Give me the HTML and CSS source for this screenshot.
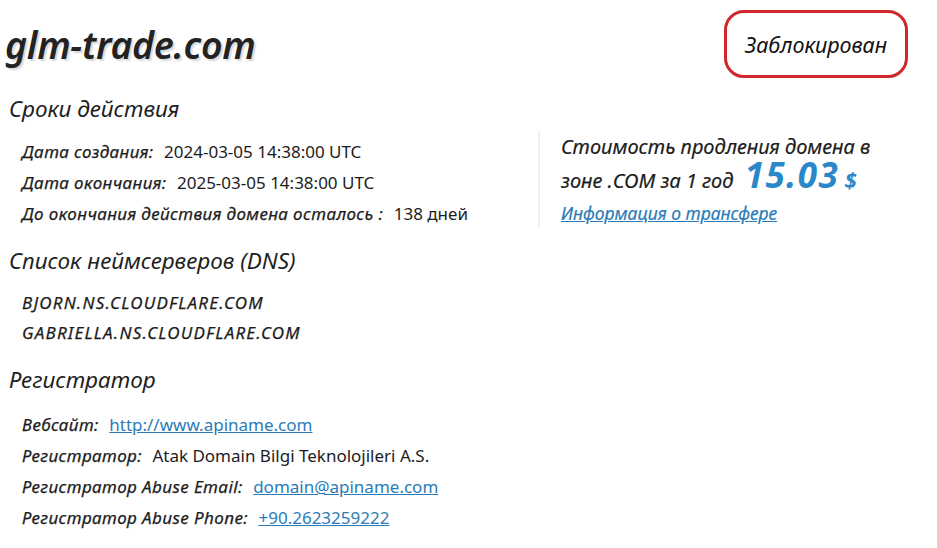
FILE: index.html
```html
<!DOCTYPE html>
<html lang="ru">
<head>
    <meta charset="UTF-8">
    <meta name="viewport" content="width=device-width, initial-scale=1.0">
    <title>glm-trade.com</title>
    <link rel="stylesheet" href="styles.css">
</head>
<body>
    <div class="header">
        <h1>glm-trade.com</h1>
        <div class="status">Заблокирован</div>
    </div>

    <div class="main">
        <div class="info">
            <h2>Сроки действия</h2>
            <div class="row"><span class="label">Дата создания:</span> <span class="value">2024-03-05 14:38:00 UTC</span></div>
            <div class="row"><span class="label">Дата окончания:</span> <span class="value">2025-03-05 14:38:00 UTC</span></div>
            <div class="row"><span class="label">До окончания действия домена осталось :</span> <span class="value">138 дней</span></div>

            <h2>Список неймсерверов (DNS)</h2>
            <div class="row ns">BJORN.NS.CLOUDFLARE.COM</div>
            <div class="row ns">GABRIELLA.NS.CLOUDFLARE.COM</div>

            <h2 class="registrar">Регистратор</h2>
            <div class="row"><span class="label">Вебсайт:</span> <a class="value" href="#">http://www.apiname.com</a></div>
            <div class="row"><span class="label">Регистратор:</span> <span class="value">Atak Domain Bilgi Teknolojileri A.S.</span></div>
            <div class="row"><span class="label">Регистратор Abuse Email:</span> <a class="value" href="#">domain@apiname.com</a></div>
            <div class="row"><span class="label">Регистратор Abuse Phone:</span> <a class="value" href="#">+90.2623259222</a></div>
        </div>

        <div class="renew">
            <p class="renew-text">Стоимость продления домена в<br>зоне .COM за 1 год <span class="price">15.03</span> <span class="currency">$</span></p>
            <a class="transfer" href="#">Информация о трансфере</a>
        </div>
    </div>
</body>
</html>
```

FILE: styles.css
```css
body {
    font-family: "Noto Sans", "Open Sans", sans-serif;
    color: #1c1c1c;
    background: #fff;
    margin: 0;
    padding: 10px 29px 0 5px;
}
.header {
    display: flex;
    justify-content: space-between;
    align-items: center;
}
h1 {
    margin: 0;
    font-size: 37.5px;
    font-style: italic;
    font-weight: 600;
    letter-spacing: -0.3px;
    color: #222;
    text-shadow: 2px 2px 2px #d6d6d6;
}
.status {
    box-sizing: border-box;
    width: 184px;
    height: 68px;
    display: flex;
    align-items: center;
    justify-content: center;
    border: 3px solid #d1262b;
    border-radius: 20px;
    font-size: 21.5px;
    font-style: italic;
    color: #111;
}
.main {
    display: flex;
    align-items: flex-start;
}
.info {
    width: 533px;
    margin-top: 4px;
}
h2 {
    margin: 17px 0 12px 4px;
    font-size: 22.5px;
    line-height: 30px;
    font-style: italic;
    font-weight: 400;
    color: #1f1f1f;
}
h2:first-child {
    margin-top: 12px;
}
h2.registrar {
    margin-bottom: 14px;
}
.row {
    padding-left: 17px;
    font-size: 17px;
    line-height: 31px;
}
.row.ns {
    line-height: 30px;
    font-style: italic;
    letter-spacing: 1.2px;
    -webkit-text-stroke: 0.25px currentColor;
}
.label {
    font-style: italic;
    letter-spacing: 0.4px;
    -webkit-text-stroke: 0.25px currentColor;
    margin-right: 6px;
}
a {
    color: #2b7bb9;
}
.renew {
    margin-top: 52px;
    padding-left: 21px;
    border-left: 2px solid #f1f1f1;
}
.renew-text {
    margin: 0;
    font-size: 20px;
    line-height: 34px;
    font-style: italic;
    -webkit-text-stroke: 0.2px currentColor;
}
.price {
    font-size: 35px;
    line-height: 0;
    font-weight: 700;
    letter-spacing: 1.5px;
    color: #2a88c8;
    margin-left: 6px;
    -webkit-text-stroke: 0;
}
.currency {
    font-size: 22px;
    line-height: 0;
    font-weight: 700;
    color: #2a88c8;
    -webkit-text-stroke: 0;
}
.transfer {
    display: block;
    font-size: 17.5px;
    line-height: 30px;
    font-style: italic;
    -webkit-text-stroke: 0.2px currentColor;
}
```
